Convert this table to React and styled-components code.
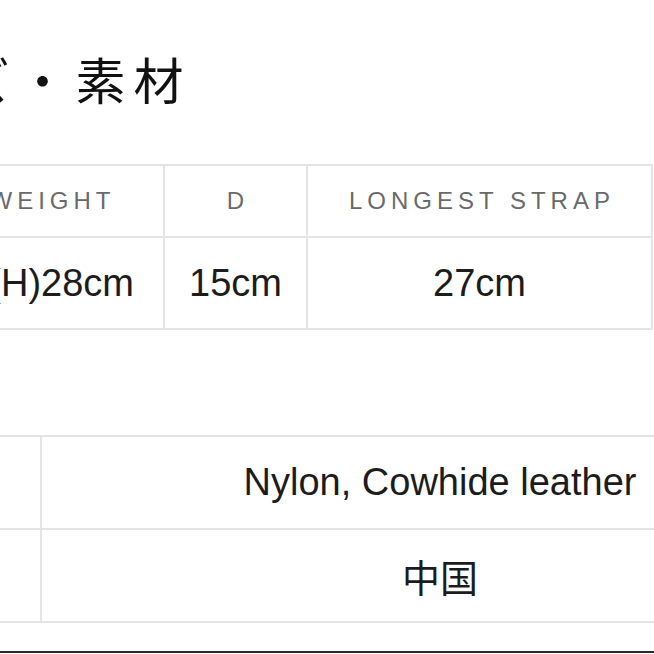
import React from "react";
import styled, { createGlobalStyle } from "styled-components";

const GlobalStyle = createGlobalStyle`
  html, body {
    margin: 0;
    padding: 0;
    background: #ffffff;
    overflow: hidden;
  }
  body {
    font-family: "Liberation Sans", "Noto Sans CJK JP", sans-serif;
    color: #1c1c1c;
  }
`;

const Page = styled.div`
  width: 1100px;
  margin-left: -211px;
  padding-top: 48px;
`;

const Title = styled.h2`
  margin: 0;
  padding-left: 56px;
  font-family: "Noto Sans CJK JP", sans-serif;
  font-weight: 400;
  font-size: 50px;
  line-height: 60px;
  letter-spacing: 8px;
  color: #111;
`;

const Grid = styled.div`
  display: grid;
  grid-template-columns: ${(p) => p.$cols};
  width: max-content;
  margin-top: ${(p) => p.$top}px;
  border-top: 2px solid #e4e4e4;
  border-left: 2px solid #e4e4e4;
`;

const Cell = styled.div`
  display: flex;
  align-items: center;
  justify-content: center;
  height: ${(p) => p.$h}px;
  border-right: 2px solid #e4e4e4;
  border-bottom: 2px solid #e4e4e4;
  white-space: nowrap;
  overflow: hidden;
`;

const Head = styled(Cell)`
  font-size: 24px;
  letter-spacing: 5px;
  padding-left: 5px;
  color: #6a6a6a;
`;

const Value = styled(Cell)`
  font-size: 38px;
  color: #1c1c1c;
  font-family: "Liberation Sans", "Noto Sans CJK SC", sans-serif;
  padding-right: ${(p) => p.$shift || 0}px;
`;

const Divider = styled.div`
  margin-top: 28px;
  height: 2px;
  background: #2a2a2a;
`;

const sizeCols = "374px 143px 345px";
const materialCols = "251px 798px";

export default function App() {
  return (
    <>
      <GlobalStyle />
      <Page>
        <Title>サイズ・素材</Title>

        <Grid $cols={sizeCols} $top={56}>
          <Head $h={70}>WIDTH × WEIGHT</Head>
          <Head $h={70}>D</Head>
          <Head $h={70}>LONGEST STRAP</Head>
          <Value $h={90} $shift={8}>(W)38cm×(H)28cm</Value>
          <Value $h={90}>15cm</Value>
          <Value $h={90}>27cm</Value>
        </Grid>

        <Grid $cols={materialCols} $top={105}>
          <Head $h={91}>素材</Head>
          <Value $h={91}>Nylon, Cowhide leather</Value>
          <Head $h={91}>原産国</Head>
          <Value $h={91}>中国</Value>
        </Grid>

        <Divider />
      </Page>
    </>
  );
}
